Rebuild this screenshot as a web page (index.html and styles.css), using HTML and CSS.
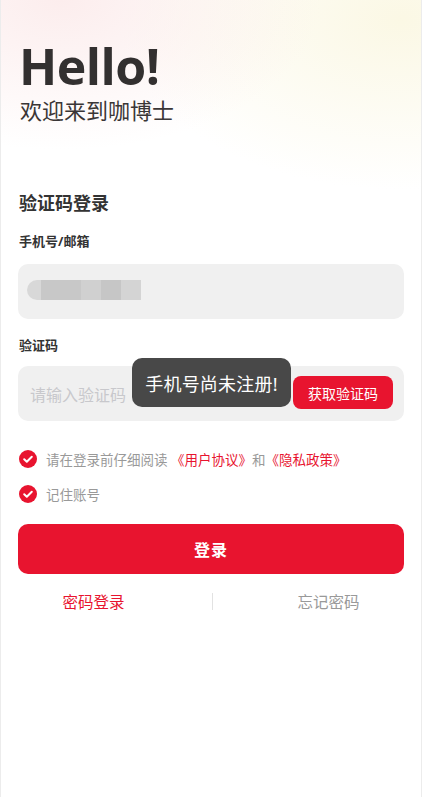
FILE: index.html
```html
<!DOCTYPE html>
<html lang="zh-CN">
<head>
    <meta charset="UTF-8">
    <meta name="viewport" content="width=device-width, initial-scale=1.0">
    <title>验证码登录</title>
    <link rel="stylesheet" href="styles.css">
</head>
<body>
    <div class="page">
        <div class="hero">
            <h1 class="hello">Hello!</h1>
            <p class="welcome">欢迎来到咖博士</p>
        </div>

        <div class="form">
            <h2 class="title">验证码登录</h2>

            <label class="label">手机号/邮箱</label>
            <div class="field">
                <div class="masked">
                    <span class="blk b1"></span>
                    <span class="blk b2"></span>
                    <span class="blk b3"></span>
                    <span class="blk b4"></span>
                    <span class="blk b5"></span>
                </div>
            </div>

            <label class="label">验证码</label>
            <div class="field code-field">
                <span class="placeholder">请输入验证码</span>
                <button class="get-code">获取验证码</button>
                <div class="toast">手机号尚未注册!</div>
            </div>

            <div class="check-row">
                <span class="check">
                    <svg width="18" height="18" viewBox="0 0 18 18"><circle cx="9" cy="9" r="9" fill="#e8142f"/><path d="M5.2 9.2l2.6 2.5 5-5" fill="none" stroke="#fff" stroke-width="2" stroke-linecap="round" stroke-linejoin="round"/></svg>
                </span>
                <span class="check-text">请在登录前仔细阅读 <a class="link">《用户协议》</a>和<a class="link">《隐私政策》</a></span>
            </div>
            <div class="check-row">
                <span class="check">
                    <svg width="18" height="18" viewBox="0 0 18 18"><circle cx="9" cy="9" r="9" fill="#e8142f"/><path d="M5.2 9.2l2.6 2.5 5-5" fill="none" stroke="#fff" stroke-width="2" stroke-linecap="round" stroke-linejoin="round"/></svg>
                </span>
                <span class="check-text">记住账号</span>
            </div>

            <button class="login">登录</button>

            <div class="bottom-links">
                <a class="pwd-login">密码登录</a>
                <span class="divider"></span>
                <a class="forget">忘记密码</a>
            </div>
        </div>
    </div>
</body>
</html>
```

FILE: styles.css
```css
html, body {
    margin: 0;
    padding: 0;
    height: 100%;
}
body {
    font-family: "Noto Sans", "Noto Sans CJK SC", sans-serif;
    background: #fff;
}
.page {
    height: 797px;
    box-sizing: border-box;
    border-left: 1px solid #ececec;
    border-right: 1px solid #ececec;
    background:
        radial-gradient(ellipse 260px 150px at 60px 0px, rgba(250, 225, 225, 0.6), rgba(255, 255, 255, 0)),
        radial-gradient(ellipse 280px 170px at 400px 20px, rgba(250, 246, 222, 0.8), rgba(255, 255, 255, 0)),
        #fff;
}
.hero {
    padding: 40px 0 0 18px;
    height: 152px;
    box-sizing: border-box;
}
.hello {
    margin: 0;
    font-family: "Open Sans", sans-serif;
    font-weight: 700;
    font-size: 50px;
    line-height: 52px;
    color: #333030;
    letter-spacing: -0.5px;
}
.welcome {
    margin: 4px 0 0 0;
    font-size: 22px;
    line-height: 28px;
    color: #3a3636;
    padding-left: 1px;
}
.form {
    padding: 0 17px 0 17px;
}
.title {
    margin: 39px 0 0 1px;
    font-size: 18px;
    line-height: 24px;
    font-weight: 700;
    color: #333;
}
.label {
    display: block;
    margin: 17px 0 0 1px;
    font-size: 13px;
    line-height: 18px;
    font-weight: 700;
    color: #333;
}
.field {
    position: relative;
    margin-top: 14px;
    height: 55px;
    border-radius: 10px;
    background: #f0f0f0;
    display: flex;
    align-items: center;
    padding: 0 11px 0 9px;
}
.masked {
    display: flex;
    align-items: center;
    height: 20px;
    margin-top: -3px;
}
.blk {
    display: block;
    height: 20px;
}
.b1 {
    width: 14px;
    background: #d8d8d8;
    border-radius: 10px 0 0 10px;
}
.b2 { width: 40px; background: #c8c8c8; }
.b3 { width: 20px; background: #d0d0d0; }
.b4 { width: 20px; background: #c6c6c6; }
.b5 { width: 20px; background: #d4d4d4; }
.code-field {
    justify-content: space-between;
    margin-top: 12px;
}
.placeholder {
    font-size: 16px;
    color: #c8c8cc;
    padding-left: 3px;
}
.get-code {
    border: none;
    background: #e8142f;
    color: #fff;
    font-family: inherit;
    font-size: 14px;
    width: 100px;
    height: 33px;
    border-radius: 8px;
    padding: 0;
    margin-top: -2px;
}
.toast {
    position: absolute;
    left: 114px;
    top: -8px;
    width: 159px;
    height: 49px;
    box-sizing: border-box;
    border-radius: 10px;
    background: #484848;
    color: #fff;
    font-size: 18px;
    display: flex;
    align-items: center;
    justify-content: center;
    letter-spacing: 0.2px;
}
.check-row {
    display: flex;
    align-items: center;
    margin-left: 1px;
    height: 18px;
}
.code-field + .check-row {
    margin-top: 29px;
}
.check-row + .check-row {
    margin-top: 17px;
}
.check {
    display: flex;
    width: 18px;
    height: 18px;
}
.check-text {
    margin-left: 9px;
    font-size: 13.5px;
    color: #999;
}
.link {
    color: #e8142f;
    text-decoration: none;
}
.login {
    display: block;
    width: 100%;
    margin-top: 21px;
    height: 50px;
    border: none;
    border-radius: 10px;
    background: #e8142f;
    color: #fff;
    font-family: inherit;
    font-size: 16px;
    font-weight: 700;
    letter-spacing: 1px;
}
.bottom-links {
    display: flex;
    align-items: center;
    margin-top: 17px;
    height: 20px;
}
.pwd-login, .forget {
    flex: 1;
    text-align: center;
    font-size: 15.5px;
}
.pwd-login {
    color: #e8142f;
    margin-right: 43px;
}
.forget {
    color: #999;
    margin-left: 40px;
}
.divider {
    width: 1px;
    height: 17px;
    background: #e2e2e2;
}
```
